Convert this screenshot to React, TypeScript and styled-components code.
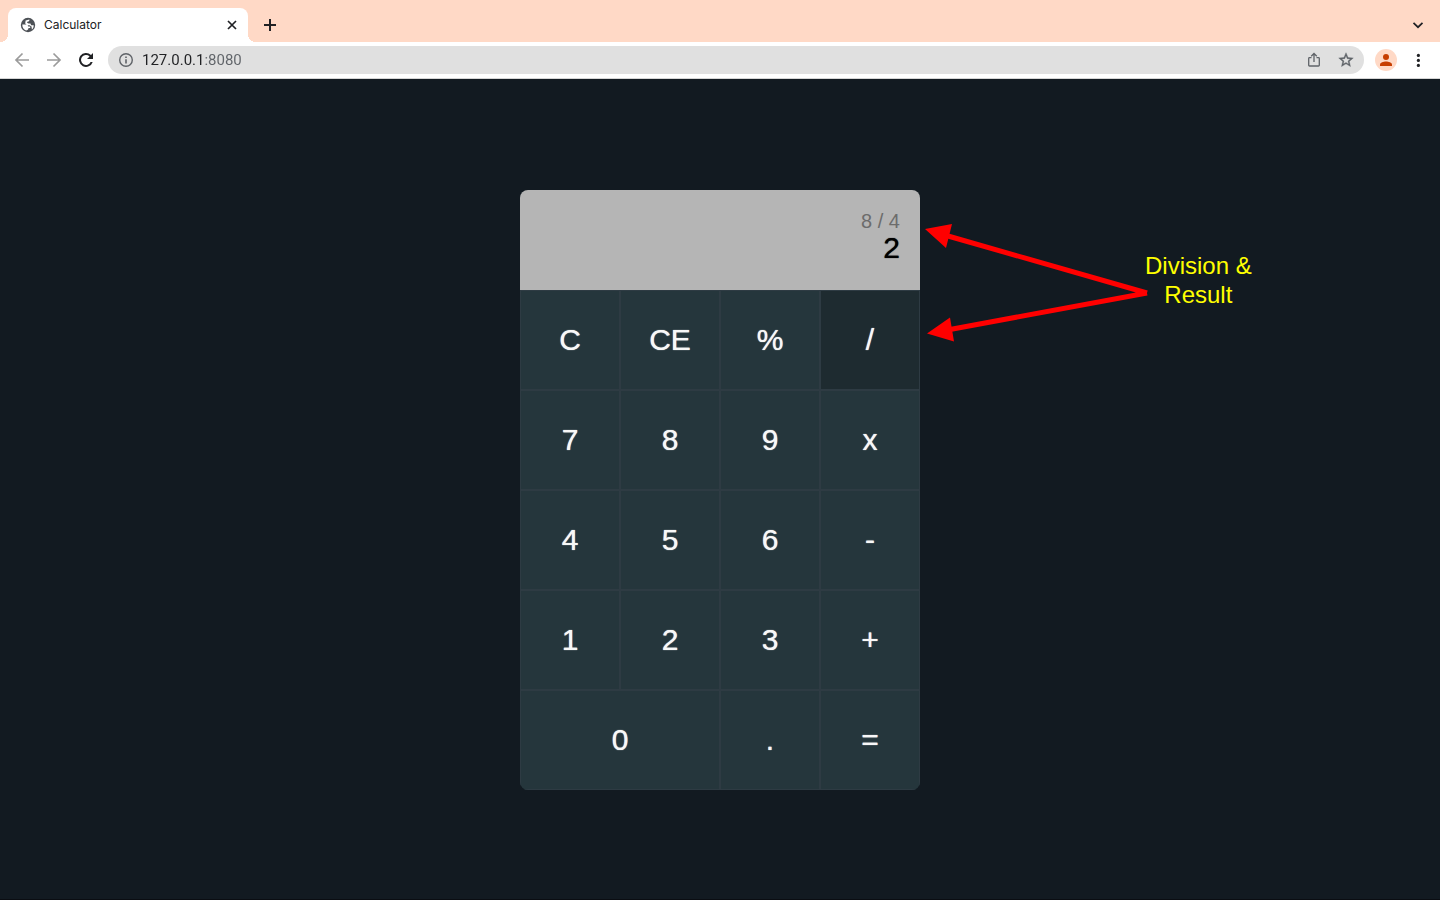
import React from 'react';
import styled, { createGlobalStyle } from 'styled-components';

const GlobalStyle = createGlobalStyle`
  *, *::before, *::after { box-sizing: border-box; }
  body { margin: 0; background: #121a21; font-family: "Liberation Sans", Arial, sans-serif; }
  button { border: 0; padding: 0; font: inherit; color: inherit; background: none; cursor: pointer; }
`;

const Browser = styled.div`
  display: flex;
  flex-direction: column;
  min-height: 100vh;
`;

const TabStrip = styled.header`
  display: flex;
  align-items: center;
  height: 42px;
  padding: 8px 12px 0 8px;
  background: #ffd9c6;
  font-family: Inter, "Liberation Sans", sans-serif;
`;

const Tab = styled.div`
  position: relative;
  display: flex;
  align-items: center;
  gap: 8px;
  width: 240px;
  height: 34px;
  padding: 0 8px 0 12px;
  border-radius: 8px 8px 0 0;
  background: #fff;
  color: #202124;
  font-size: 12px;

  &::before, &::after {
    content: "";
    position: absolute;
    bottom: 0;
    width: 8px;
    height: 8px;
  }
  &::before { right: 100%; background: radial-gradient(circle at 0 0, transparent 8px, #fff 8px); }
  &::after { left: 100%; background: radial-gradient(circle at 100% 0, transparent 8px, #fff 8px); }
`;

const TabTitle = styled.span`
  flex: 1;
  line-height: 16px;
`;

const IconButton = styled.button<{ $size?: number; $color?: string }>`
  display: grid;
  place-items: center;
  flex: none;
  width: ${(p) => p.$size ?? 16}px;
  height: ${(p) => p.$size ?? 16}px;
  color: ${(p) => p.$color ?? '#202124'};
`;

const StripSpacer = styled.div`
  flex: 1;
`;

const NewTab = styled(IconButton)`
  margin-left: 12px;
`;

const Toolbar = styled.nav`
  display: flex;
  align-items: center;
  gap: 11px;
  height: 37px;
  padding: 0 12px;
  border-bottom: 1px solid #d5d5d5;
  background: #fff;
  font-family: Inter, "Liberation Sans", sans-serif;
`;

const Navigation = styled.div`
  display: flex;
  gap: 12px;
  padding-right: 1px;
`;

const Address = styled.div`
  display: flex;
  flex: 1;
  align-items: center;
  gap: 8px;
  height: 28px;
  padding: 0 10px;
  border-radius: 14px;
  background: #e0e0e0;
`;

const AddressInput = styled.input`
  flex: 1;
  min-width: 0;
  padding: 0;
  border: 0;
  outline: 0;
  font: 15px/20px Roboto, "Liberation Sans", sans-serif;
  color: transparent;
  background: linear-gradient(90deg, #202124 61px, #5f6368 61px);
  background-clip: text;
  -webkit-background-clip: text;
`;

const AddressActions = styled.div`
  display: flex;
  gap: 16px;
`;

const Avatar = styled.button`
  display: grid;
  place-items: center;
  flex: none;
  width: 22px;
  height: 22px;
  border-radius: 50%;
  background: #ffd9c6;
  color: #c73e00;
`;

const Page = styled.main`
  display: flex;
  flex: 1;
  align-items: center;
  justify-content: center;
  padding: 1px 0 0;
  border-bottom: 1px solid #0a0d12;
  overflow: hidden;
`;

const Calculator = styled.section`
  position: relative;
  width: 400px;
`;

const Display = styled.div`
  display: flex;
  flex-direction: column;
  align-items: flex-end;
  height: 100px;
  padding: 20px;
  border-radius: 8px 8px 0 0;
  background: #b5b5b5;
`;

const Expression = styled.div`
  color: #6c6c6c;
  font-size: 20px;
  line-height: 22px;
`;

const Result = styled.output`
  color: #000;
  font-size: 30px;
  line-height: 32px;
  text-shadow: 0 0 1px currentColor;
`;

const Keypad = styled.div`
  display: grid;
  grid-template-columns: repeat(4, 1fr);
  grid-auto-rows: 100px;
  overflow: hidden;
  border-radius: 0 0 8px 8px;
`;

const Key = styled.button<{ $wide?: boolean; $active?: boolean }>`
  && {
    grid-column: span ${(p) => (p.$wide ? 2 : 1)};
    border: 1px solid #2e3b43;
    background: ${(p) => (p.$active ? '#1e2b30' : '#25363c')};
    color: #f8f8f8;
    font-size: 30px;
    text-shadow: 0 0 1px currentColor;
  }
`;

const Callout = styled.aside`
  position: absolute;
  top: 30px;
  left: 100%;
  display: flex;
  align-items: flex-start;
`;

const CalloutText = styled.p`
  margin: 31px 0 0 -4px;
  color: #ff0;
  font-size: 24px;
  line-height: 29px;
  text-align: center;
  white-space: nowrap;
`;

const keys = ['C', 'CE', '%', '/', '7', '8', '9', 'x', '4', '5', '6', '-', '1', '2', '3', '+', '0', '.', '='];

const stroke = { fill: 'none', stroke: 'currentColor', strokeWidth: 2 };

export default function App() {
  return (
    <Browser>
      <GlobalStyle />
      <TabStrip>
        <Tab>
          <svg width="16" height="16" viewBox="0 0 16 16" aria-hidden="true">
            <circle cx="8" cy="8" r="7.200" fill="#4d5156" />
            <path d="M2.300 7.500H5.600C7.200 7.500 8.100 8.300 8.200 9.600H10.200V11H8.500C8.400 12.600 7.500 13.400 6 13.400C3.600 12.500 2.200 10.300 2.300 7.500ZM9.400 2.400C9.600 3.600 9 4.400 7.700 4.500L7 5.700L8.700 6.500H10.400L11.200 8.300H13.700C13.800 10 13 11.600 11.900 12.500L11.500 9.600L9.600 8.300H7.200L5.200 6.500L5.600 3.600Z" fill="#fff" />
          </svg>
          <TabTitle>Calculator</TabTitle>
          <IconButton aria-label="Close tab">
            <svg width="16" height="16" viewBox="0 0 16 16" {...stroke} strokeWidth={1.7}><path d="M4 4l8 8M12 4l-8 8" /></svg>
          </IconButton>
        </Tab>
        <NewTab aria-label="New tab" $size={20}>
          <svg width="20" height="20" viewBox="0 0 20 20" {...stroke}><path d="M10 4v12M4 10h12" /></svg>
        </NewTab>
        <StripSpacer />
        <IconButton aria-label="Search tabs" $size={20}>
          <svg width="20" height="20" viewBox="0 0 20 20" {...stroke} strokeWidth={1.7}><path d="M5.500 7.800L10 12.200l4.500-4.400" /></svg>
        </IconButton>
      </TabStrip>
      <Toolbar aria-label="Browser controls">
        <Navigation>
          <IconButton aria-label="Back" $size={20} $color="#9b9b9b">
            <svg width="20" height="20" viewBox="0 0 20 20" {...stroke} strokeWidth={1.7}><path d="M17 10H4.500M10.500 3.500L4 10l6.500 6.500" /></svg>
          </IconButton>
          <IconButton aria-label="Forward" $size={20} $color="#9b9b9b">
            <svg width="20" height="20" viewBox="0 0 20 20" {...stroke} strokeWidth={1.7}><path d="M3 10h12.500M9.500 3.500L16 10l-6.500 6.500" /></svg>
          </IconButton>
          <IconButton aria-label="Reload" $size={20}>
            <svg width="20" height="20" viewBox="0 0 20 20"><path d="M15 5A7 7 0 1 0 16.700 12h-2.100a5 5 0 1 1-1-5.600L11 9h6V3z" fill="currentColor" /></svg>
          </IconButton>
        </Navigation>
        <Address>
          <IconButton aria-label="Site information" $color="#5f6368">
            <svg width="16" height="16" viewBox="0 0 16 16"><circle cx="8" cy="8" r="6.300" fill="none" stroke="currentColor" strokeWidth="1.400" /><path d="M7.200 7.200h1.600v4.300H7.200zM7.200 4.500h1.600v1.600H7.200z" fill="currentColor" /></svg>
          </IconButton>
          <AddressInput aria-label="Address" defaultValue="127.0.0.1:8080" />
          <AddressActions>
            <IconButton aria-label="Share" $color="#5f6368">
              <svg width="16" height="16" viewBox="0 0 16 16" fill="none" stroke="currentColor" strokeWidth="1.300"><path d="M5.500 5.700h-2q-.8 0-.8.8v6.700q0 .8.8.8h9q.8 0 .8-.8V6.500q0-.8-.8-.8h-2M8 10V1.800M5.200 4.300L8 1.500l2.800 2.800" /></svg>
            </IconButton>
            <IconButton aria-label="Bookmark" $color="#5f6368">
              <svg width="16" height="16" viewBox="1 1 22 22" fill="currentColor"><path stroke="currentColor" strokeWidth=".5" d="M22 9.240l-7.190-.62L12 2 9.190 8.630 2 9.240l5.460 4.730L5.820 21 12 17.270 18.180 21l-1.630-7.030L22 9.240zM12 15.400l-3.760 2.270 1-4.280-3.320-2.880 4.380-.38L12 6.100l1.710 4.040 4.380.38-3.320 2.880 1 4.280L12 15.400z" /></svg>
            </IconButton>
          </AddressActions>
        </Address>
        <Avatar aria-label="Profile">
          <svg width="14" height="14" viewBox="0 0 14 14" fill="currentColor"><circle cx="7" cy="4" r="3" /><path d="M1 13v-1.500C1 9.500 4.500 8.500 7 8.500s6 1 6 3V13z" /></svg>
        </Avatar>
        <IconButton aria-label="Menu" $size={20}>
          <svg width="20" height="20" viewBox="0 0 20 20" fill="currentColor"><circle cx="10.400" cy="5.400" r="1.600" /><circle cx="10.400" cy="10.400" r="1.600" /><circle cx="10.400" cy="15.400" r="1.600" /></svg>
        </IconButton>
      </Toolbar>
      <Page>
        <Calculator aria-label="Calculator">
          <Display>
            <Expression>8 / 4</Expression>
            <Result>2</Result>
          </Display>
          <Keypad>
            {keys.map((k) => (
              <Key key={k} type="button" $wide={k === '0'} $active={k === '/'}>{k}</Key>
            ))}
          </Keypad>
          <Callout>
            <svg width="229" height="130" viewBox="0 0 229 130" fill="#f00" aria-hidden="true">
              <path d="M28 16L227 73M30 109.500L227 73" stroke="#f00" strokeWidth="5" />
              <path d="M5 9L32 4L26 28zM7 113.500L30 97.500L34 121.500z" />
            </svg>
            <CalloutText>Division &amp;<br />Result</CalloutText>
          </Callout>
        </Calculator>
      </Page>
    </Browser>
  );
}
